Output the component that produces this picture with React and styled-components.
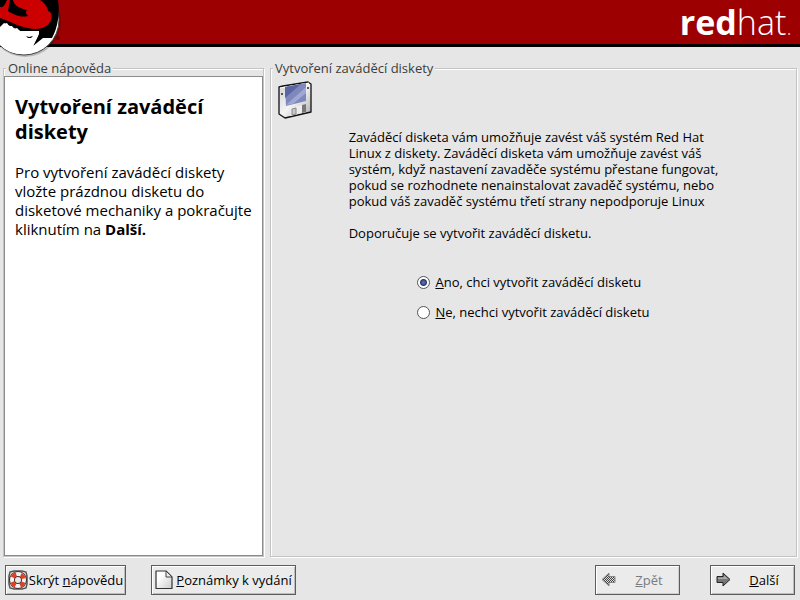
import React, { useState } from "react";
import styled, { createGlobalStyle } from "styled-components";

const GlobalStyle = createGlobalStyle`
  * { box-sizing: border-box; }
  body {
    margin: 0;
    background: #e6e6e6;
    color: #000;
    font: 13px/16px "Open Sans", "Noto Sans", sans-serif;
  }
`;

const Page = styled.div`
  display: flex;
  flex-direction: column;
  min-height: 100vh;
`;

const Header = styled.header`
  position: relative;
  display: flex;
  justify-content: flex-end;
  align-items: center;
  height: 47px;
  padding: 4px 8px 0 0;
  background: #9c0000;
  border-bottom: 3px solid #000;
`;

const HatLogo = styled.svg`
  position: absolute;
  top: 0;
  left: 0;
`;

const Brand = styled.div`
  color: #fff;
  font: 300 34px/40px "Open Sans", sans-serif;
  b { font-weight: 700; }
  small { font-size: 24px; color: #e6a8a8; }
`;

const Main = styled.main`
  flex: 1;
  display: grid;
  grid-template-columns: 261px 1fr;
  gap: 6px;
  padding: 13px 3px 8px;
`;

const Group = styled.fieldset`
  display: flex;
  flex-direction: column;
  min-width: 0;
  margin: 0;
  padding: 0;
  border: 1px solid #c3c3c3;
  box-shadow: 1px 1px #fff, inset 1px 1px #fff;
`;

const GroupTitle = styled.legend`
  margin-left: 2px;
  padding: 0 2px;
  background: #e6e6e6;
  color: #3c3c3c;
  line-height: 16px;
`;

const HelpText = styled.article`
  flex: 1;
  padding: 17px 6px 10px 10px;
  background: #fff;
  border: 1px solid #8b8b8b;
  font-size: 15px;
  line-height: 19px;
  h1 {
    margin: 0 0 19px;
    font-size: 20px;
    line-height: 25px;
  }
  p { margin: 0; }
`;

const StepBody = styled.div`
  padding: 5px 7px;
`;

const Description = styled.div`
  width: fit-content;
  margin: 7px auto 0;
  p { margin: 0 0 16px; }
`;

const Options = styled.div`
  display: flex;
  flex-direction: column;
  gap: 14px;
  width: fit-content;
  margin: 33px auto 0;
`;

const Option = styled.label`
  display: flex;
  align-items: center;
  gap: 5px;
`;

const Radio = styled.input`
  appearance: none;
  width: 13px;
  height: 13px;
  margin: 0;
  border: 1px solid #555;
  border-radius: 50%;
  background: #fff;
  &:checked {
    background: radial-gradient(circle at 50% 50%, #5568a8 0 1px, #27376f 3px, #fff 4px);
  }
`;

const Footer = styled.footer`
  display: flex;
  padding: 0 5px 5px;
`;

const Button = styled.button`
  display: flex;
  align-items: center;
  width: ${(p) => p.$width}px;
  height: 30px;
  margin-left: ${(p) => p.$before || 0};
  padding: 0 1px 0 2px;
  border: 1px solid #5c5c5c;
  background: #ebebeb;
  box-shadow: inset 1px 1px #fff, inset -1px -1px #bdbdbd;
  color: #000;
  font: inherit;
  white-space: nowrap;
  span { flex: 1; text-align: center; }
  &:disabled { color: #7c7c7c; box-shadow: inset 1px 1px #fff, inset -1px -1px #cfcfcf; }
`;

function Hat() {
  return (
    <HatLogo width="64" height="58" viewBox="0 0 64 58" aria-hidden="true">
      <circle cx="25" cy="21" r="36" fill="#000" opacity="0.2" />
      <circle cx="24" cy="20" r="35" fill="#fff" stroke="#444" />
      <path d="M0 0H58C60 13 58 27 52 38H43L33 46L39 34L39 31L20 31L4 23L0 27Z" fill="#000" />
      <path d="M0 27L4 28L4 24L7 23L9 26L12 26L14 29L17 28L20 31L30 32L39 31L38 36L33 46L37 45L43 39L52 38L45 46C34 55 16 57 5 49L0 45Z" fill="#fff" />
      <path d="M26 36L29 37L33 36L31 38H28Z" fill="#000" />
      <path d="M0 7C4 8 5 4 7 0H40C45 3 48 8 48 11C52 12 53 17 50 22C46 29 37 30 28 28C16 26 8 20 0 18Z" fill="#c00" />
      <path d="M10 0H13C14 5 18 8 27 10C25 12 26 14 28 16C20 18 13 14 8 11Z" fill="#000" />
      <circle cx="58" cy="38" r="2" fill="#690000" />
    </HatLogo>
  );
}

function Floppy() {
  return (
    <svg width="34" height="38" viewBox="0 0 34 38" aria-hidden="true">
      <defs>
        <linearGradient id="disk" x1="0" y1="0" x2="1" y2="1">
          <stop offset="0" stopColor="#d0d0d0" />
          <stop offset="0.5" stopColor="#f4f4f4" />
          <stop offset="1" stopColor="#aaa" />
        </linearGradient>
      </defs>
      <path d="M1 6L5 5L30 1L33 3V31L7 37L1 33Z" fill="url(#disk)" stroke="#111" strokeWidth="1.300" strokeLinejoin="round" />
      <path d="M2 7L31 2" stroke="#fff" />
      <path d="M7 6L28 2V20L8 25Z" fill="#7f88bd" />
      <path d="M7 6L23 3L7 17Z" fill="#5a65a4" />
      <path d="M8 24L28 6V12L15 23Z" fill="#a0a7d3" />
      <path d="M12 27L28 23V31L12 35Z" fill="#ededed" />
      <path d="M24 24L28 23V31L24 32Z" fill="#777" />
      <path d="M14 28L18 27V33L14 34Z" fill="#c9c9c9" stroke="#888" />
      <path d="M4 12V14M30 6V8" stroke="#555" strokeWidth="2" />
    </svg>
  );
}

function LifeRing() {
  return (
    <svg width="20" height="20" viewBox="0 0 20 20" aria-hidden="true">
      <path d="M2 2L6 1H14L18 2L19 6V14L18 18L14 19H6L2 18L1 14V6Z" fill="none" stroke="#555" strokeWidth="1.500" />
      <circle cx="10" cy="10" r="6" fill="#e8e8e8" stroke="#3c2b2b" strokeWidth="6" />
      <circle cx="10" cy="10" r="6" fill="none" stroke="#f3f3f3" strokeWidth="4" />
      <circle cx="10" cy="10" r="6" fill="none" stroke="#e23d20" strokeWidth="4" strokeDasharray="4.700 4.720" transform="rotate(22 10 10)" />
    </svg>
  );
}

function Sheet() {
  return (
    <svg width="20" height="20" viewBox="0 0 20 20" aria-hidden="true">
      <defs>
        <linearGradient id="sheet" x1="0" y1="0" x2="1" y2="1">
          <stop offset="0.300" stopColor="#fff" />
          <stop offset="1" stopColor="#ccc" />
        </linearGradient>
      </defs>
      <path d="M2 1H12L18 7V18.500H2Z" fill="url(#sheet)" stroke="#333" strokeWidth="1.200" strokeLinejoin="round" />
      <path d="M12 1V7H18Z" fill="#eee" stroke="#444" />
    </svg>
  );
}

function Arrow({ back }) {
  return (
    <svg width="22" height="20" viewBox="0 0 22 20" aria-hidden="true">
      {back && (
        <defs>
          <pattern id="dither" width="2" height="2" patternUnits="userSpaceOnUse">
            <path fill="#ddd" d="M0 0H2V2H0Z" />
            <path fill="#444" d="M0 0H1V1H0ZM1 1H2V2H1Z" />
          </pattern>
        </defs>
      )}
      <g transform={back ? "translate(21 0) scale(-1 1)" : undefined}>
        <path d="M4 6.500H10V3L17 9.500L10 16V12.500H4Z" fill={back ? "url(#dither)" : "#777"} stroke={back ? "#888" : "#222"} />
        {!back && <path d="M5 7.500H11V5.500L15 9H5Z" fill="#aaa" />}
      </g>
    </svg>
  );
}

export default function App() {
  const [choice, setChoice] = useState("yes");
  return (
    <Page>
      <GlobalStyle />
      <Header>
        <Hat />
        <Brand><b>red</b>hat<small>.</small></Brand>
      </Header>
      <Main>
        <Group>
          <GroupTitle>Online nápověda</GroupTitle>
          <HelpText>
            <h1>Vytvoření zaváděcí diskety</h1>
            <p>
              Pro vytvoření zaváděcí diskety<br />
              vložte prázdnou disketu do<br />
              disketové mechaniky a pokračujte<br />
              kliknutím na <b>Další.</b>
            </p>
          </HelpText>
        </Group>
        <Group>
          <GroupTitle>Vytvoření zaváděcí diskety</GroupTitle>
          <StepBody>
            <Floppy />
            <Description>
              <p>
                Zaváděcí disketa vám umožňuje zavést váš systém Red Hat<br />
                Linux z diskety. Zaváděcí disketa vám umožňuje zavést váš<br />
                systém, když nastavení zavaděče systému přestane fungovat,<br />
                pokud se rozhodnete nenainstalovat zavaděč systému, nebo<br />
                pokud váš zavaděč systému třetí strany nepodporuje Linux
              </p>
              <p>Doporučuje se vytvořit zaváděcí disketu.</p>
            </Description>
            <Options role="radiogroup" aria-label="Vytvoření zaváděcí diskety">
              <Option>
                <Radio type="radio" name="disk" checked={choice === "yes"} onChange={() => setChoice("yes")} />
                <span><u>A</u>no, chci vytvořit zaváděcí disketu</span>
              </Option>
              <Option>
                <Radio type="radio" name="disk" checked={choice === "no"} onChange={() => setChoice("no")} />
                <span><u>N</u>e, nechci vytvořit zaváděcí disketu</span>
              </Option>
            </Options>
          </StepBody>
        </Group>
      </Main>
      <Footer>
        <Button type="button" $width={121}><LifeRing /><span>Skrýt <u>n</u>ápovědu</span></Button>
        <Button type="button" $width={145} $before="25px"><Sheet /><span><u>P</u>oznámky k vydání</span></Button>
        <Button type="button" $width={85} $before="auto" disabled><Arrow back /><span><u>Z</u>pět</span></Button>
        <Button type="button" $width={85} $before="30px"><Arrow /><span><u>D</u>alší</span></Button>
      </Footer>
    </Page>
  );
}
